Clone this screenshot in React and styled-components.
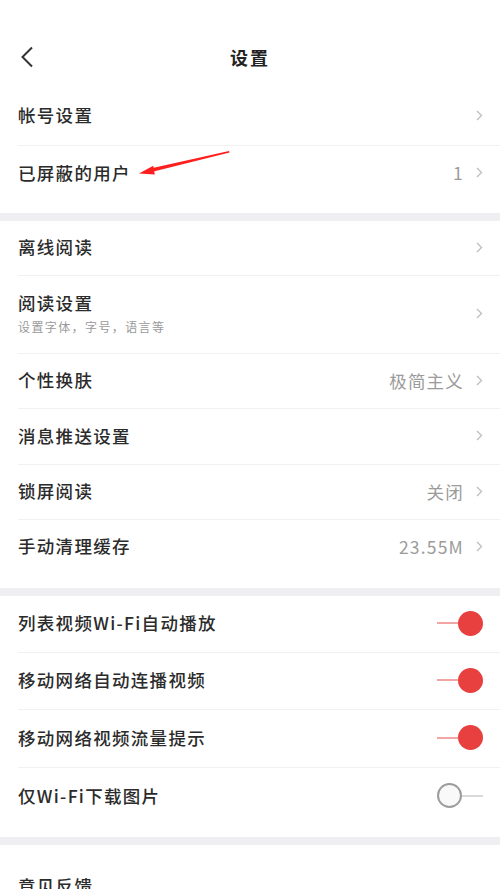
import React from "react";
import styled, { createGlobalStyle } from "styled-components";

const GlobalStyle = createGlobalStyle`
  html, body {
    margin: 0;
    padding: 0;
    background: #ffffff;
  }
  body {
    font-family: "Noto Sans CJK SC", "Noto Sans", sans-serif;
    color: #2b2b2b;
  }
`;

const Page = styled.div`
  position: relative;
  width: 500px;
  height: 889px;
  overflow: hidden;
  background: #ffffff;
`;

const Header = styled.header`
  height: 87px;
  box-sizing: border-box;
  padding-top: 28px;
  padding-bottom: 2px;
  display: grid;
  grid-template-columns: 60px 1fr 60px;
  align-items: center;
`;

const BackButton = styled.button`
  border: 0;
  background: none;
  padding: 0 0 0 20px;
  height: 57px;
  display: flex;
  align-items: center;
  cursor: pointer;
`;

const Title = styled.h1`
  margin: 0;
  text-align: center;
  font-size: 18px;
  font-weight: 700;
  letter-spacing: 2px;
  color: #222;
`;

const Section = styled.section`
  background: #fff;
  padding-top: ${(p) => p.$pt || 0}px;
  padding-bottom: ${(p) => p.$pb || 0}px;
  border-bottom: ${(p) => (p.$last ? "none" : "8px solid #efeff1")};
`;

const Row = styled.div`
  display: flex;
  align-items: center;
  height: ${(p) => p.$h || 56}px;
  margin-left: 18px;
  padding-right: 17px;
  padding-bottom: 2px;
  box-sizing: border-box;
  & + & {
    border-top: 1px solid #f1f1f1;
  }
`;

const Label = styled.div`
  flex: 1;
  display: flex;
  flex-direction: column;
  gap: 7px;
`;

const LabelText = styled.span`
  font-size: 17.5px;
  font-weight: 500;
  letter-spacing: 1.3px;
  color: #2b2b2b;
  line-height: 20px;
`;

const SubText = styled.span`
  font-size: 12px;
  letter-spacing: 1.4px;
  color: #9a9a9a;
  line-height: 14px;
`;

const Value = styled.span`
  font-size: 17.5px;
  letter-spacing: 1.2px;
  color: #9b9b9b;
  margin-right: 12px;
`;

const Toggle = styled.div`
  width: 46px;
  height: 25px;
  display: flex;
  align-items: center;
  flex-direction: ${(p) => (p.$on ? "row" : "row-reverse")};
`;

const Track = styled.span`
  flex: 1;
  height: 2px;
  background: ${(p) => (p.$on ? "#f2a5a5" : "#d9d9d9")};
`;

const Knob = styled.span`
  width: 25px;
  height: 25px;
  box-sizing: border-box;
  border-radius: 50%;
  background: ${(p) => (p.$on ? "#e8403f" : "#f9f9f9")};
  border: ${(p) => (p.$on ? "none" : "2px solid #9c9c9c")};
`;

const Annotation = styled.svg`
  position: absolute;
  left: 135px;
  top: 145px;
`;

const Chevron = () => (
  <svg width="7" height="11" viewBox="0 0 7 11">
    <path d="M1 1 L5.5 5.5 L1 10" fill="none" stroke="#bdbdbd" strokeWidth="1.3" />
  </svg>
);

const BackIcon = () => (
  <svg width="14" height="22" viewBox="0 0 14 22">
    <path d="M12 1.5 L2.5 11 L12 20.5" fill="none" stroke="#333" strokeWidth="2" />
  </svg>
);

const NavRow = ({ label, sub, value, h, arrow = true }) => (
  <Row $h={h}>
    <Label>
      <LabelText>{label}</LabelText>
      {sub && <SubText>{sub}</SubText>}
    </Label>
    {value && <Value>{value}</Value>}
    {arrow && <Chevron />}
  </Row>
);

const SwitchRow = ({ label, on, h }) => (
  <Row $h={h}>
    <Label>
      <LabelText>{label}</LabelText>
    </Label>
    <Toggle $on={on}>
      <Track $on={on} />
      <Knob $on={on} />
    </Toggle>
  </Row>
);

export default function App() {
  return (
    <Page>
      <GlobalStyle />
      <Header>
        <BackButton aria-label="返回">
          <BackIcon />
        </BackButton>
        <Title>设置</Title>
        <span />
      </Header>

      <Section $pb={12}>
        <NavRow label="帐号设置" h={58} />
        <NavRow label="已屏蔽的用户" value="1" h={56} />
      </Section>

      <Section $pb={14}>
        <NavRow label="离线阅读" h={54} />
        <NavRow label="阅读设置" sub="设置字体，字号，语言等" h={78} />
        <NavRow label="个性换肤" value="极简主义" h={55} />
        <NavRow label="消息推送设置" h={56} />
        <NavRow label="锁屏阅读" value="关闭" h={55} />
        <NavRow label="手动清理缓存" value="23.55M" h={55} />
      </Section>

      <Section $pb={12}>
        <SwitchRow label="列表视频Wi-Fi自动播放" on h={56} />
        <SwitchRow label="移动网络自动连播视频" on h={57} />
        <SwitchRow label="移动网络视频流量提示" on h={58} />
        <SwitchRow label="仅Wi-Fi下载图片" h={58} />
      </Section>

      <Section $pt={14} $last>
        <NavRow label="意见反馈" h={56} arrow={false} />
      </Section>

      <Annotation width="100" height="35" viewBox="0 0 100 35">
        <polygon points="94,6 94.6,7.6 18.6,26.6 17.6,23" fill="#ff1f1f" />
        <polygon points="4,28.5 18.2,20.8 19.8,29.4" fill="#ff1f1f" />
      </Annotation>
    </Page>
  );
}
